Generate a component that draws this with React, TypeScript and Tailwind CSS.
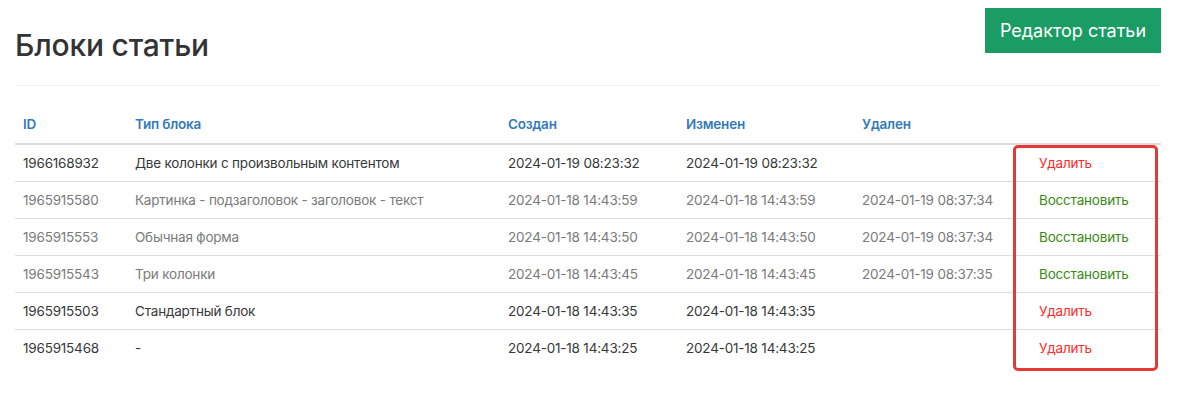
const rows = [
  { id: "1966168932", type: "Две колонки с произвольным контентом", created: "2024-01-19 08:23:32", changed: "2024-01-19 08:23:32", deleted: "", active: true },
  { id: "1965915580", type: "Картинка - подзаголовок - заголовок - текст", created: "2024-01-18 14:43:59", changed: "2024-01-18 14:43:59", deleted: "2024-01-19 08:37:34", active: false },
  { id: "1965915553", type: "Обычная форма", created: "2024-01-18 14:43:50", changed: "2024-01-18 14:43:50", deleted: "2024-01-19 08:37:34", active: false },
  { id: "1965915543", type: "Три колонки", created: "2024-01-18 14:43:45", changed: "2024-01-18 14:43:45", deleted: "2024-01-19 08:37:35", active: false },
  { id: "1965915503", type: "Стандартный блок", created: "2024-01-18 14:43:35", changed: "2024-01-18 14:43:35", deleted: "", active: true },
  { id: "1965915468", type: "-", created: "2024-01-18 14:43:25", changed: "2024-01-18 14:43:25", deleted: "", active: true },
]

export default function App() {
  return (
    <div className="min-h-[394px] bg-white px-[15px] pt-2 font-['Inter','Noto_Sans',sans-serif] text-[#333]" style={{ width: 1176 }}>
      <div className="flex items-start justify-between">
        <h1 className="mt-[20px] text-[30px] leading-[34px] font-medium tracking-[-0.2px] text-[#333]">Блоки статьи</h1>
        <button className="h-[45px] w-[176px] bg-[#1b9c64] text-[18px] text-white">Редактор статьи</button>
      </div>

      <hr className="mt-[23px] border-t border-[#eee]" />

      <div className="relative mt-[18px]">
        <table className="w-full table-fixed border-collapse text-[13.5px] tracking-[-0.2px]">
          <colgroup>
            <col className="w-[112px]" />
            <col className="w-[373px]" />
            <col className="w-[178px]" />
            <col className="w-[176px]" />
            <col className="w-[177px]" />
            <col />
          </colgroup>
          <thead>
            <tr className="border-b-2 border-[#ddd] text-left text-[#337ab7]">
              <th className="px-2 pt-[10px] pb-[9px] font-semibold">ID</th>
              <th className="px-2 pt-[10px] pb-[9px] font-semibold">Тип блока</th>
              <th className="px-2 pt-[10px] pb-[9px] font-semibold">Создан</th>
              <th className="px-2 pt-[10px] pb-[9px] font-semibold">Изменен</th>
              <th className="px-2 pt-[10px] pb-[9px] font-semibold">Удален</th>
              <th className="px-2 pt-[10px] pb-[9px]"></th>
            </tr>
          </thead>
          <tbody>
            {rows.map((r) => (
              <tr key={r.id} className={`border-t border-[#ddd] first:border-t-0 h-[37px] ${r.active ? "text-[#383838]" : "text-[#7a7a7a]"}`}>
                <td className="px-2">{r.id}</td>
                <td className="px-2 whitespace-nowrap">{r.type}</td>
                <td className="px-2">{r.created}</td>
                <td className="px-2">{r.changed}</td>
                <td className="px-2">{r.deleted}</td>
                <td className="px-2">
                  {r.active ? (
                    <a className="text-[#ff2b2b]">Удалить</a>
                  ) : (
                    <a className="text-[#3a8a12]">Восстановить</a>
                  )}
                </td>
              </tr>
            ))}
          </tbody>
        </table>
        <div className="pointer-events-none absolute left-[998px] top-[41px] h-[226px] w-[145px] rounded-[5px] border-[3px] border-[#e53935]" />
      </div>
    </div>
  )
}
